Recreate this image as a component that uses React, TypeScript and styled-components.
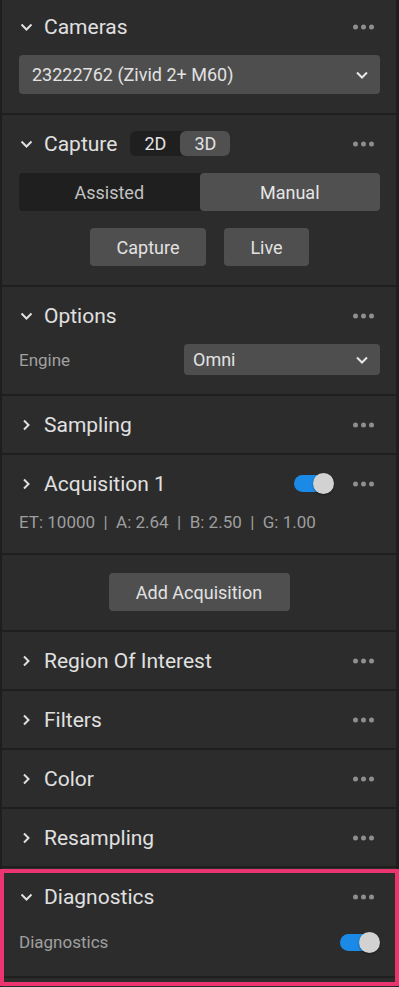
import styled, { createGlobalStyle } from 'styled-components';

const GlobalStyle = createGlobalStyle`
  html {
    overflow: hidden;
    background: #1e1e1e;
  }
  body {
    margin: 0;
    padding: 0;
    font-family: Roboto, "Liberation Sans", Arial, sans-serif;
  }
`;

const Panel = styled.div`
  width: 394px;
  margin: -2px 0 0 2px;
  padding-bottom: 12px;
  background-color: #2c2c2c;
  display: flex;
  flex-direction: column;
`;

const Section = styled.section<{ $highlight?: boolean }>`
  position: relative;
  border-bottom: 2px solid #1f1f1f;

  ${({ $highlight }) =>
    $highlight &&
    `
    &::after {
      content: '';
      position: absolute;
      top: 1px;
      left: -2px;
      right: -3px;
      bottom: -10px;
      border: 4px solid #ec3470;
      pointer-events: none;
    }
  `}
`;

const Header = styled.div`
  height: 57px;
  display: flex;
  align-items: center;
  padding: 0 22px 0 18px;
  gap: 11px;
`;

const Title = styled.span`
  color: #e0e0e0;
  font-size: 21px;
  font-weight: 400;
`;

const Spacer = styled.div`
  flex: 1;
`;

const Body = styled.div<{ $gap?: number; $top?: number }>`
  display: flex;
  flex-direction: column;
  gap: ${({ $gap }) => $gap ?? 0}px;
  padding: ${({ $top }) => $top ?? 0}px 16px 19px 17px;
`;

const Select = styled.div<{ $height?: number; $width?: number; $padLeft?: number }>`
  height: ${({ $height }) => $height ?? 39}px;
  width: ${({ $width }) => ($width ? `${$width}px` : 'auto')};
  background-color: #4e4e4e;
  border-radius: 4px;
  display: flex;
  align-items: center;
  justify-content: space-between;
  padding: 0 12px 0 ${({ $padLeft }) => $padLeft ?? 13}px;
  box-sizing: border-box;
  color: #e2e2e2;
  font-size: 18px;
`;

const ModeSwitch = styled.div`
  display: flex;
  height: 25px;
  background-color: #1f1f1f;
  border-radius: 6px;
  margin-left: 2px;
`;

const ModeOption = styled.div<{ $active?: boolean }>`
  width: 50px;
  display: flex;
  align-items: center;
  justify-content: center;
  border-radius: 6px;
  font-size: 18px;
  color: #e2e2e2;
  background-color: ${({ $active }) => ($active ? '#505050' : 'transparent')};
`;

const Segmented = styled.div`
  display: grid;
  grid-template-columns: 1fr 1fr;
  height: 38px;
  background-color: #1f1f1f;
  border-radius: 4px;
`;

const Segment = styled.div<{ $active?: boolean }>`
  display: flex;
  align-items: center;
  justify-content: center;
  border-radius: 4px;
  font-size: 18px;
  color: ${({ $active }) => ($active ? '#e6e6e6' : '#c2c2c2')};
  background-color: ${({ $active }) => ($active ? '#505050' : 'transparent')};
`;

const ButtonRow = styled.div`
  display: flex;
  justify-content: center;
  gap: 18px;
`;

const Button = styled.div<{ $width: number }>`
  width: ${({ $width }) => $width}px;
  height: 38px;
  display: flex;
  align-items: center;
  justify-content: center;
  background-color: #4f4f4f;
  border-radius: 4px;
  color: #e2e2e2;
  font-size: 18px;
`;

const FieldRow = styled.div<{ $height?: number }>`
  display: flex;
  align-items: center;
  justify-content: space-between;
  height: ${({ $height }) => $height ?? 31}px;
`;

const Label = styled.span`
  color: #a0a0a0;
  font-size: 17px;
`;

const Summary = styled.div`
  color: #9e9e9e;
  font-size: 17px;
  height: 20px;
  line-height: 20px;
  padding-bottom: 2px;
  white-space: pre;
`;

const CenterBody = styled.div`
  display: flex;
  justify-content: center;
  padding: 18px 0 19px;
`;

const Toggle = styled.span<{ $on?: boolean }>`
  position: relative;
  display: inline-block;
  width: 40px;
  height: 21px;
  flex-shrink: 0;

  &::before {
    content: '';
    position: absolute;
    left: 0;
    top: 2px;
    width: 38px;
    height: 17px;
    border-radius: 9px;
    background-color: ${({ $on }) => ($on ? '#1a8ae6' : '#555')};
  }

  &::after {
    content: '';
    position: absolute;
    top: 0;
    left: ${({ $on }) => ($on ? '19px' : '0')};
    width: 21px;
    height: 21px;
    border-radius: 50%;
    background-color: #d2d2d2;
    box-shadow: 0 1px 2px rgba(0, 0, 0, 0.4);
  }
`;

const Chevron = ({ open }: { open?: boolean }) =>
  open ? (
    <svg width="13" height="8" viewBox="0 0 13 8" style={{ flexShrink: 0 }}>
      <polyline points="1.5,1.5 6.5,6.5 11.5,1.5" fill="none" stroke="#e0e0e0" strokeWidth="2" />
    </svg>
  ) : (
    <svg width="13" height="12" viewBox="0 0 13 12" style={{ flexShrink: 0 }}>
      <polyline points="4,1.5 8.5,6 4,10.5" fill="none" stroke="#e0e0e0" strokeWidth="2" />
    </svg>
  );

const SelectArrow = () => (
  <svg width="12" height="8" viewBox="0 0 12 8">
    <polyline points="1,1.5 6,6.5 11,1.5" fill="none" stroke="#e8e8e8" strokeWidth="2" />
  </svg>
);

const Dots = () => (
  <svg width="21" height="6" viewBox="0 0 21 6" style={{ marginLeft: 8, flexShrink: 0 }}>
    <circle cx="2.5" cy="3" r="2.5" fill="#8e8e8e" />
    <circle cx="10.5" cy="3" r="2.5" fill="#8e8e8e" />
    <circle cx="18.5" cy="3" r="2.5" fill="#8e8e8e" />
  </svg>
);

interface HeadProps {
  title: string;
  open?: boolean;
  children?: React.ReactNode;
  action?: React.ReactNode;
}

const SectionHead = ({ title, open, children, action }: HeadProps) => (
  <Header>
    <Chevron open={open} />
    <Title>{title}</Title>
    {children}
    <Spacer />
    {action}
    <Dots />
  </Header>
);

const collapsed = ['Region Of Interest', 'Filters', 'Color', 'Resampling'];

const App = () => (
  <>
    <GlobalStyle />
    <Panel>
      <Section>
        <SectionHead title="Cameras" open />
        <Body>
          <Select>
            <span>23222762 (Zivid 2+ M60)</span>
            <SelectArrow />
          </Select>
        </Body>
      </Section>

      <Section>
        <SectionHead title="Capture" open>
          <ModeSwitch>
            <ModeOption>2D</ModeOption>
            <ModeOption $active>3D</ModeOption>
          </ModeSwitch>
        </SectionHead>
        <Body $gap={17} $top={1}>
          <Segmented>
            <Segment>Assisted</Segment>
            <Segment $active>Manual</Segment>
          </Segmented>
          <ButtonRow>
            <Button $width={116}>Capture</Button>
            <Button $width={85}>Live</Button>
          </ButtonRow>
        </Body>
      </Section>

      <Section>
        <SectionHead title="Options" open />
        <Body>
          <FieldRow>
            <Label>Engine</Label>
            <Select $height={31} $width={196} $padLeft={9}>
              <span>Omni</span>
              <SelectArrow />
            </Select>
          </FieldRow>
        </Body>
      </Section>

      <Section>
        <SectionHead title="Sampling" />
      </Section>

      <Section>
        <SectionHead title="Acquisition 1" action={<Toggle $on />} />
        <Body>
          <Summary>ET: 10000  |  A: 2.64  |  B: 2.50  |  G: 1.00</Summary>
        </Body>
      </Section>

      <Section>
        <CenterBody>
          <Button $width={181}>Add Acquisition</Button>
        </CenterBody>
      </Section>

      {collapsed.map((title) => (
        <Section key={title}>
          <SectionHead title={title} />
        </Section>
      ))}

      <Section $highlight>
        <SectionHead title="Diagnostics" open />
        <Body $top={2}>
          <FieldRow $height={30}>
            <Label>Diagnostics</Label>
            <Toggle $on />
          </FieldRow>
        </Body>
      </Section>
    </Panel>
  </>
);

export default App;
